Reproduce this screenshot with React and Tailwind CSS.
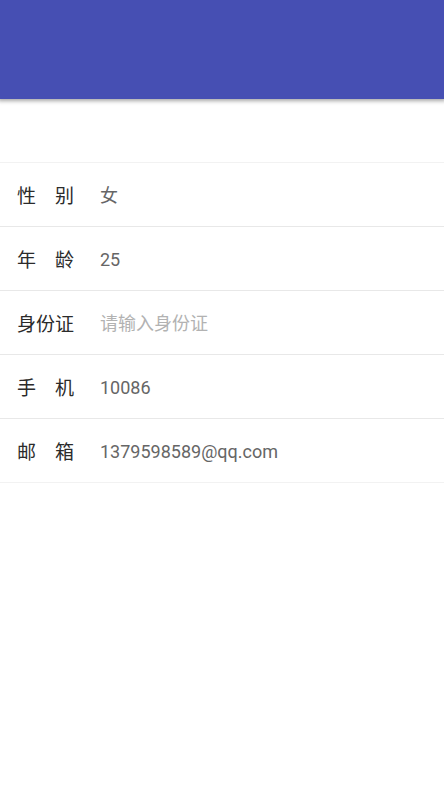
const fields = [
  { id: "gender", label: "性别", value: "女", type: "text" },
  { id: "age", label: "年龄", value: "25", type: "text" },
  { id: "idcard", label: "身份证", placeholder: "请输入身份证", type: "text" },
  { id: "phone", label: "手机", value: "10086", type: "tel" },
  { id: "email", label: "邮箱", value: "1379598589@qq.com", type: "email" },
];

// two-character labels are spread to the width of three
const FieldLabel = ({ id, text }) => (
  <label
    htmlFor={id}
    className="flex w-[57px] shrink-0 justify-between whitespace-nowrap pt-1 text-[19px] 
      text-[#2b2b2b]"
  >
    {text.split("").map((char) => (
      <span key={char}>{char}</span>
    ))}
  </label>
);

const Field = ({ id, label, value, placeholder, type }) => (
  <div
    className="flex h-16 items-center border-b border-[#e8e8e8] px-[17px] 
      pt-0.5 last:border-[#f2f2f2]"
  >
    <FieldLabel id={id} text={label} />
    <input
      id={id}
      type={type}
      defaultValue={value}
      placeholder={placeholder}
      className="ml-[26px] min-w-0 flex-1 bg-transparent text-lg text-[#666666] 
        outline-none placeholder:text-[#b2b2b2]"
    />
  </div>
);

export default function App() {
  return (
    <div className="min-h-screen overflow-x-hidden bg-white font-['Roboto','Noto_Sans_CJK_SC',sans-serif]">
      <header className="h-[99px] bg-[#464fb3] shadow-[0_0_4px_2px_rgba(0,0,0,0.35)]" />

      <form className="mt-[63px]">
        <div className="border-t border-[#f2f2f2]">
          {fields.map((field) => (
            <Field key={field.id} {...field} />
          ))}
        </div>
      </form>
    </div>
  );
}
